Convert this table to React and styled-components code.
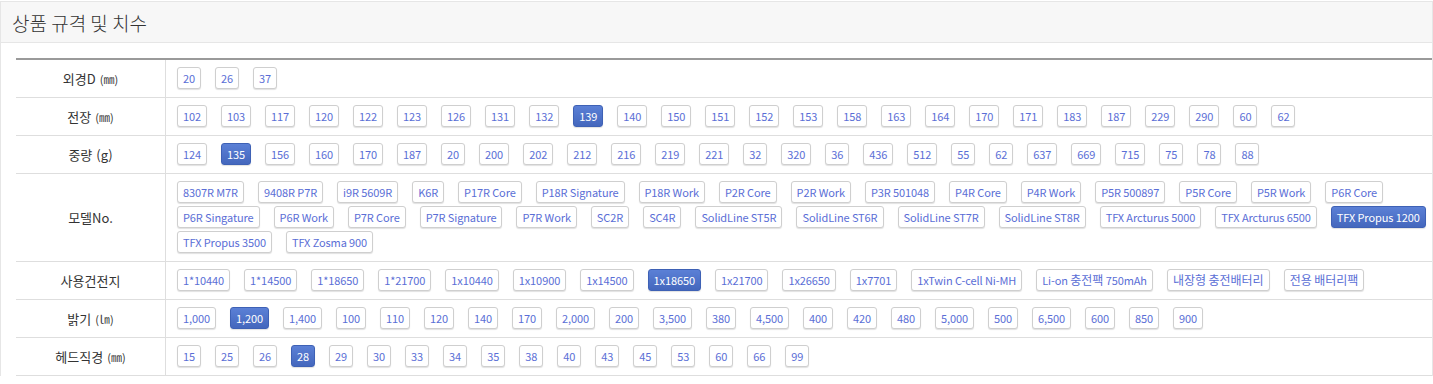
import React from "react";
import styled, { createGlobalStyle } from "styled-components";

const Global = createGlobalStyle`
  html, body { margin: 0; padding: 0; background: #fff; }
  body { font-family: "Noto Sans CJK KR", "Noto Sans", sans-serif; color: #333; }
  * { box-sizing: border-box; }
`;

const Panel = styled.section`
  margin-top: 1px;
  border: 1px solid #e6e6e6;
  border-bottom: none;
  background: #fff;
`;

const PanelHeader = styled.header`
  height: 41px;
  background: #f7f7f7;
  border-bottom: 1px solid #e6e6e6;
  display: flex;
  align-items: center;
  padding-left: 11px;
`;

const Title = styled.h3`
  margin: 0;
  font-size: 19px;
  font-weight: 300;
  color: #333;
  line-height: 1;
`;

const PanelBody = styled.div`
  padding: 15px 0 0 15px;
`;

const SpecTable = styled.div`
  border-top: 2px solid #9a9a9a;
`;

const Row = styled.div`
  display: grid;
  grid-template-columns: 150px 1fr;
  border-bottom: 1px solid #dedede;
`;

const Label = styled.div`
  border-right: 1px solid #dedede;
  display: flex;
  align-items: center;
  justify-content: center;
  font-size: 13px;
  color: #333;
  line-height: 16px;
  white-space: nowrap;
`;

const Unit = styled.span`
  font-size: ${(p) => (p.$small ? "11px" : "13px")};
  margin-left: 4px;
`;

const Values = styled.div`
  display: flex;
  flex-wrap: wrap;
  column-gap: 14px;
  row-gap: 3px;
  padding: 7px 0 8px 11px;
`;

const Chip = styled.button`
  height: 22px;
  padding: 0 5px;
  font-family: "Noto Sans CJK KR", "Noto Sans", sans-serif;
  font-size: 11px;
  letter-spacing: -0.1px;
  line-height: 20px;
  border-radius: 3px;
  white-space: nowrap;
  cursor: pointer;
  border: 1px solid ${(p) => (p.$active ? "#3e61b5" : "#cfcfcf")};
  color: ${(p) => (p.$active ? "#fff" : "#5a6ed6")};
  background: ${(p) =>
    p.$active ? "linear-gradient(#5b80d6, #4467bd)" : "#fff"};
  box-shadow: 0 1px 1px rgba(0, 0, 0, 0.12);
`;

const Hangul = styled.span`
  font-size: 12px;
  letter-spacing: 0;
`;

function ChipText({ text }) {
  const parts = text.split(/([\uAC00-\uD7A3]+)/);
  return parts.map((p, i) =>
    /[\uAC00-\uD7A3]/.test(p) ? <Hangul key={i}>{p}</Hangul> : p
  );
}

const rows = [
  {
    label: "외경D",
    unit: "(㎜)",
    small: true,
    items: ["20", "26", "37"],
    active: null,
  },
  {
    label: "전장",
    unit: "(㎜)",
    small: true,
    items: "102 103 117 120 122 123 126 131 132 139 140 150 151 152 153 158 163 164 170 171 183 187 229 290 60 62".split(" "),
    active: "139",
  },
  {
    label: "중량",
    unit: "(g)",
    items: "124 135 156 160 170 187 20 200 202 212 216 219 221 32 320 36 436 512 55 62 637 669 715 75 78 88".split(" "),
    active: "135",
  },
  {
    label: "모델No.",
    items: [
      "8307R M7R", "9408R P7R", "i9R 5609R", "K6R", "P17R Core", "P18R Signature",
      "P18R Work", "P2R Core", "P2R Work", "P3R 501048", "P4R Core", "P4R Work",
      "P5R 500897", "P5R Core", "P5R Work", "P6R Core", "P6R Singature", "P6R Work",
      "P7R Core", "P7R Signature", "P7R Work", "SC2R", "SC4R", "SolidLine ST5R",
      "SolidLine ST6R", "SolidLine ST7R", "SolidLine ST8R", "TFX Arcturus 5000",
      "TFX Arcturus 6500", "TFX Propus 1200", "TFX Propus 3500", "TFX Zosma 900",
    ],
    active: "TFX Propus 1200",
  },
  {
    label: "사용건전지",
    items: [
      "1*10440", "1*14500", "1*18650", "1*21700", "1x10440", "1x10900", "1x14500",
      "1x18650", "1x21700", "1x26650", "1x7701", "1xTwin C-cell Ni-MH",
      "Li-on 충전팩 750mAh", "내장형 충전배터리", "전용 배터리팩",
    ],
    active: "1x18650",
  },
  {
    label: "밝기",
    unit: "(㏐)",
    small: true,
    items: "1,000 1,200 1,400 100 110 120 140 170 2,000 200 3,500 380 4,500 400 420 480 5,000 500 6,500 600 850 900".split(" "),
    active: "1,200",
  },
  {
    label: "헤드직경",
    unit: "(㎜)",
    small: true,
    items: "15 25 26 28 29 30 33 34 35 38 40 43 45 53 60 66 99".split(" "),
    active: "28",
  },
];

export default function App() {
  return (
    <>
      <Global />
      <Panel>
        <PanelHeader>
          <Title>상품 규격 및 치수</Title>
        </PanelHeader>
        <PanelBody>
          <SpecTable>
            {rows.map((r) => (
              <Row key={r.label}>
                <Label>
                  {r.label}
                  {r.unit && <Unit $small={r.small}>{r.unit}</Unit>}
                </Label>
                <Values>
                  {r.items.map((it, i) => (
                    <Chip key={i} $active={it === r.active}>
                      <ChipText text={it} />
                    </Chip>
                  ))}
                </Values>
              </Row>
            ))}
          </SpecTable>
        </PanelBody>
      </Panel>
    </>
  );
}
